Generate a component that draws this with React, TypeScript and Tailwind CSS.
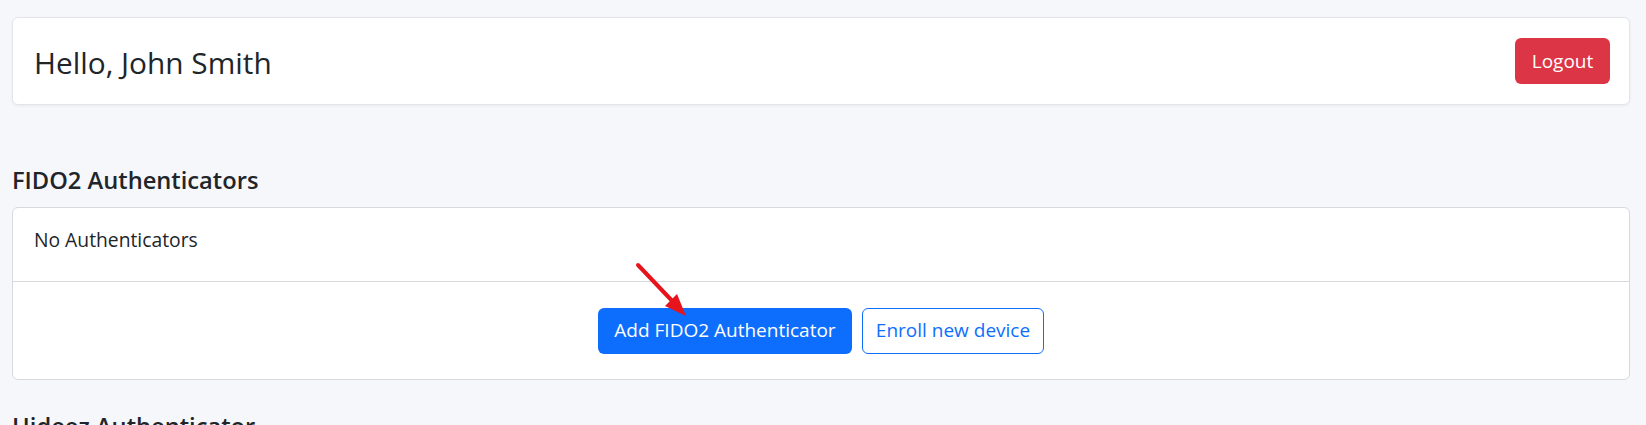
import React from "react";

const FONT = { fontFamily: '"Open Sans", "Noto Sans", sans-serif' };

function RedArrow() {
  return (
    <svg
      className="pointer-events-none absolute left-[628px] top-[255px]"
      width="70"
      height="70"
      viewBox="0 0 70 70"
      aria-hidden
    >
      <line x1="10" y1="10" x2="49" y2="51" stroke="#e8141c" strokeWidth="4" strokeLinecap="round" />
      <polygon points="58,61 37,51 49,39" fill="#e8141c" />
    </svg>
  );
}

export default function App() {
  return (
    <div className="relative min-h-[425px] overflow-hidden bg-[#f6f7fb] pl-[12px] pr-[16px] pt-[17px] text-[#212529]" style={FONT}>
      <div className="flex h-[88px] items-center justify-between rounded-[6px] border border-[#e3e5ea] bg-white pl-[21px] pr-[19px] shadow-[0_1px_3px_rgba(0,0,0,0.06)]">
        <h1 className="pt-[4px] text-[29.8px] leading-none">Hello, John Smith</h1>
        <button className="h-[46px] w-[95px] rounded-[6px] bg-[#dc3545] text-[19px] text-white">Logout</button>
      </div>

      <h2 className="mt-[61px] text-[23.7px] font-semibold leading-[29px]">FIDO2 Authenticators</h2>
      <div className="mt-[12px] rounded-[6px] border border-[#d7d9dd] bg-white">
        <div className="flex h-[74px] items-center border-b border-[#d7d9dd] px-[21px] pb-[8px] text-[19.3px]">No Authenticators</div>
        <div className="flex h-[97px] items-center justify-center gap-[10px]">
          <button className="h-[46px] w-[254px] rounded-[6px] bg-[#0d6efd] text-[19px] text-white">Add FIDO2 Authenticator</button>
          <button className="h-[46px] w-[182px] rounded-[6px] border border-[#0d6efd] bg-white text-[19px] text-[#0d6efd]">Enroll new device</button>
        </div>
      </div>

      <h2 className="mt-[32px] text-[23.7px] font-semibold leading-[29px]">Hideez Authenticator</h2>
      <RedArrow />
    </div>
  );
}
